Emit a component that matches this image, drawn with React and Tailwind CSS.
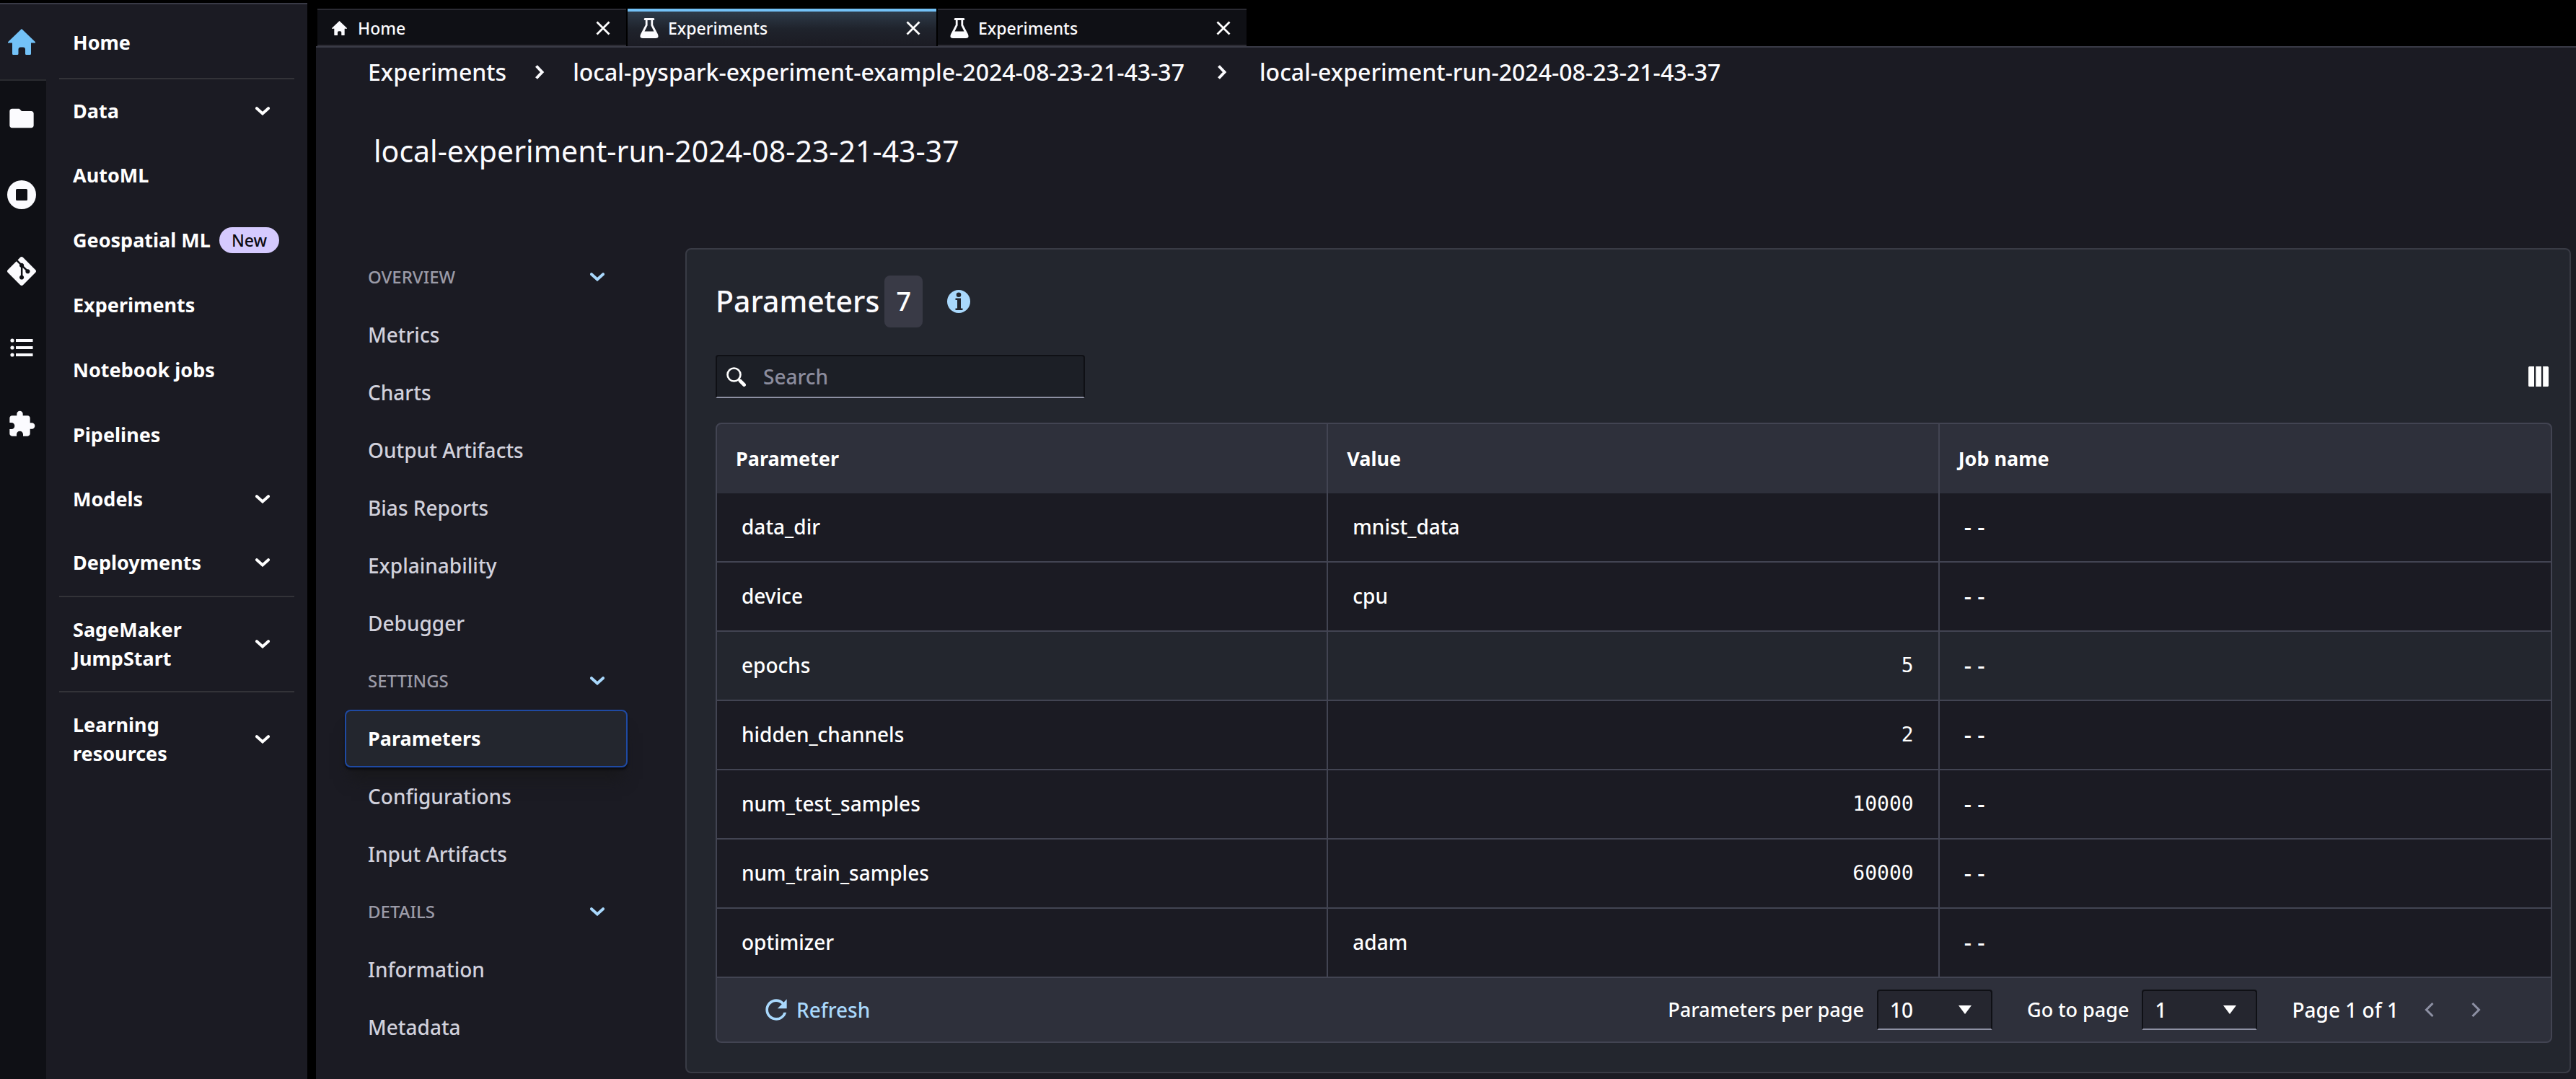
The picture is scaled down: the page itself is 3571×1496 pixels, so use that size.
import { MdExtension, MdFolder, MdRefresh } from "react-icons/md";
import { SiGit } from "react-icons/si";

const HomeIcon = ({ className }) => (
  <svg viewBox="0 0 38 36" className={className} fill="currentColor" aria-hidden="true" preserveAspectRatio="none">
    <path d="M19 0 38 18.200v1.300H32V34.500q0 1.500-1.500 1.500H25.500q-1.500 0-1.500-1.500V28.500q0-3-3-3H17.500q-3 0-3 3V34.500q0 1.500-1.500 1.500H7.500q-1.500 0-1.500-1.500V19.500H0V18.200Z" />
  </svg>
);

const RunningIcon = () => (
  <svg viewBox="0 0 40 40" className="size-10" aria-hidden="true">
    <path
      fill="currentColor"
      fillRule="evenodd"
      d="M20 0a20 20 0 1 1 0 40a20 20 0 1 1 0-40ZM13.500 12q-1.500 0-1.500 1.500v13q0 1.500 1.500 1.500h13q1.500 0 1.500-1.500v-13q0-1.500-1.500-1.500Z"
    />
  </svg>
);

const ListIcon = () => (
  <svg viewBox="0 0 32 26" className="h-[26px] w-8" fill="currentColor" aria-hidden="true">
    <circle cx="3" cy="3" r="2.600" />
    <circle cx="3" cy="13" r="2.600" />
    <circle cx="3" cy="23" r="2.600" />
    <path d="M8 1h23.500v4H8zM8 11h23.500v4H8zM8 21h23.500v4H8z" />
  </svg>
);

const Chevron = ({ className }) => (
  <svg viewBox="0 0 20 12" className={className} fill="none" stroke="currentColor" strokeWidth="4" aria-hidden="true">
    <path d="M2 2.200 10 9.400 18 2.200" strokeLinecap="round" />
  </svg>
);

const FlaskIcon = () => (
  <svg viewBox="0 0 26 28" className="h-7 w-[26px] shrink-0" fill="currentColor" aria-hidden="true">
    <path
      fillRule="evenodd"
      d="M7 0h12q1.300 0 1.300 1.500T19 3h-.800v6.500l6.500 12.500q2.600 6-2.700 6H4q-5.300 0-2.700-6L7.800 9.500V3H7q-1.300 0-1.300-1.500T7 0ZM10.600 3v7.200L6.500 18.400h13L15.400 10.200V3Z"
    />
  </svg>
);

const CloseIcon = () => (
  <svg viewBox="0 0 20 20" className="size-5" fill="none" stroke="currentColor" strokeWidth="2.800" aria-hidden="true">
    <path d="M1.500 1.500l17 17M18.500 1.500l-17 17" />
  </svg>
);

const SearchIcon = () => (
  <svg viewBox="0 0 27 27" className="h-[27px] w-[27px] shrink-0" fill="none" stroke="currentColor" aria-hidden="true">
    <circle cx="10.500" cy="10.500" r="9" strokeWidth="2.600" />
    <path d="M19 19l5.500 5.500" strokeWidth="4.800" strokeLinecap="round" />
    <path d="M16.500 16.500l3 3" strokeWidth="2.600" />
  </svg>
);

const InfoIcon = () => (
  <svg viewBox="0 0 32 32" className="size-8" aria-hidden="true">
    <circle cx="16" cy="16" r="16" fill="#a9d8fc" />
    <circle cx="16" cy="6.800" r="3.300" fill="#23262e" />
    <path d="M11.500 11.500H19V25.500h2.500V28H11.500v-2.500H14V14h-2.500Z" fill="#23262e" />
  </svg>
);

const ColumnsIcon = () => (
  <svg viewBox="0 0 28 28" className="size-7" fill="currentColor" aria-hidden="true">
    <path d="M1.500 0H8v28H1.500Q0 28 0 26.500v-25Q0 0 1.500 0ZM10.300 0h7.600v28h-7.600ZM20.200 0h6.300Q28 0 28 1.500v25q0 1.500-1.500 1.500h-6.300Z" />
  </svg>
);

const railItems = [
  { label: "Home", icon: <HomeIcon className="h-9 w-[38px]" />, active: true },
  { label: "File browser", icon: <MdFolder className="size-10" /> },
  { label: "Running instances", icon: <RunningIcon /> },
  { label: "Git", icon: <SiGit className="size-10" /> },
  { label: "Table of contents", icon: <ListIcon /> },
  { label: "Extensions", icon: <MdExtension className="size-10" /> },
];

const navItems = [
  { label: "Data", expandable: true },
  { label: "AutoML" },
  { label: "Geospatial ML", badge: "New" },
  { label: "Experiments" },
  { label: "Notebook jobs" },
  { label: "Pipelines" },
  { label: "Models", expandable: true },
  { label: "Deployments", expandable: true },
];

const tabs = [
  { label: "Home", home: true },
  { label: "Experiments", active: true },
  { label: "Experiments" },
];

const sections = [
  {
    title: "OVERVIEW",
    items: ["Metrics", "Charts", "Output Artifacts", "Bias Reports", "Explainability", "Debugger"],
  },
  { title: "SETTINGS", items: ["Parameters", "Configurations", "Input Artifacts"] },
  { title: "DETAILS", items: ["Information", "Metadata"] },
];

const rows = [
  { name: "data_dir", value: "mnist_data" },
  { name: "device", value: "cpu" },
  { name: "epochs", value: 5, hover: true },
  { name: "hidden_channels", value: 2 },
  { name: "num_test_samples", value: 10000 },
  { name: "num_train_samples", value: 60000 },
  { name: "optimizer", value: "adam" },
];

function Rail() {
  return (
    <div className="flex w-16 shrink-0 flex-col bg-[#0f1015] text-[#fbfbfe]">
      {railItems.map((item) => (
        <button
          key={item.label}
          type="button"
          aria-label={item.label}
          className={
            item.active
              ? "flex h-[106px] items-center border-b-2 border-[#2a2b30] bg-[#1b1b23] pl-[11px] text-[#73c2f7]"
              : "flex h-[106px] w-[60px] items-center justify-center pb-0.5"
          }
        >
          {item.icon}
        </button>
      ))}
    </div>
  );
}

function ExpandableRow({ label, className }) {
  return (
    <button type="button" className={className}>
      <span className="w-40">{label}</span>
      <Chevron className="h-3 w-5" />
    </button>
  );
}

function SideNav() {
  return (
    <nav className="w-[362px] shrink-0 bg-[#1b1b23] px-[18px] text-[27px] leading-10 font-bold text-white">
      <a href="#home" className="flex h-[104px] items-center border-b-2 border-[#333338] pt-1 pl-[19px]">
        Home
      </a>
      {navItems.map((item) =>
        item.expandable ? (
          <ExpandableRow
            key={item.label}
            label={item.label}
            className="flex h-[88px] w-full items-center justify-between pr-[34px] pl-[19px] text-left"
          />
        ) : (
          <a key={item.label} href="#nav" className="flex h-[90px] items-center gap-3 pl-[19px] whitespace-nowrap">
            {item.label}
            {item.badge && (
              <span className="rounded-full bg-[#d5cafe] px-[17px] text-[23px] leading-9 font-medium text-[#0b0b10]">
                {item.badge}
              </span>
            )}
          </a>
        )
      )}
      <ExpandableRow
        label="SageMaker JumpStart"
        className="mt-0.5 flex h-[134px] w-full items-center justify-between border-y-2 border-[#333338] pr-[34px] pl-[19px] text-left"
      />
      <ExpandableRow
        label="Learning resources"
        className="flex h-[130px] w-full items-center justify-between pr-[34px] pl-[19px] text-left"
      />
    </nav>
  );
}

function TabBar() {
  return (
    <div className="flex gap-0.5 border-b-2 border-[#393a46] pl-0.5" role="tablist">
      {tabs.map((tab, i) => (
        <div
          key={i}
          className={
            tab.active
              ? "flex h-[52px] w-[428px] items-center border-t-4 border-[#73c2f7] bg-linear-to-b from-[#2e3c4a] via-[#1f232c] to-[#1b1b23] pr-[22px] pb-0.5 pl-[17px]"
              : "flex h-[52px] w-[428px] items-center border-y-2 border-[#2b2b33] bg-[#0f1015] pt-0.5 pr-[22px] pl-[17px]"
          }
        >
          <button type="button" role="tab" className="flex min-w-0 flex-1 items-center gap-[13px] text-[23px] font-medium text-[#fbfbfe]">
            {tab.home ? (
              <span className="flex w-[26px] justify-center">
                <HomeIcon className="h-5 w-[21px]" />
              </span>
            ) : (
              <FlaskIcon />
            )}
            {tab.label}
          </button>
          <button type="button" aria-label={`Close ${tab.label}`} className="text-white">
            <CloseIcon />
          </button>
        </div>
      ))}
    </div>
  );
}

function Crumbs() {
  const sep = (
    <svg viewBox="0 0 14 20" className="h-5 w-3.5" fill="none" stroke="currentColor" strokeWidth="4" aria-hidden="true">
      <path d="M2.500 1.500 10.500 10l-8 8.500" />
    </svg>
  );
  return (
    <nav aria-label="Breadcrumb" className="flex h-[68px] items-center pl-[72px] text-[32px] font-medium text-[#fbfbfe]">
      <a href="#experiments">Experiments</a>
      <span className="flex w-[92px] justify-center">{sep}</span>
      <a href="#experiment">local-pyspark-experiment-example-2024-08-23-21-43-37</a>
      <span className="flex w-[104px] justify-center">{sep}</span>
      <a href="#run">local-experiment-run-2024-08-23-21-43-37</a>
    </nav>
  );
}

function SectionNav() {
  return (
    <nav className="w-[392px] shrink-0 text-[28px] font-medium text-[#d1d1dc]">
      {sections.map((section) => (
        <div key={section.title}>
          <button
            type="button"
            className="flex h-20 w-full items-center justify-between pr-8 pl-8 text-2xl text-[#9b9ba8]"
          >
            {section.title}
            <Chevron className="h-3 w-5 text-[#a9d8fc]" />
          </button>
          {section.items.map((item) => (
            <a
              key={item}
              href="#section"
              className={
                item === "Parameters"
                  ? "flex h-20 items-center rounded-lg border-2 border-[#1f4aa3] bg-[#23262e] pl-[30px] text-[27px] font-bold text-white shadow-[0_3px_3px_#0c0c10,0_24px_20px_-8px_#18181b]"
                  : "flex h-20 items-center pl-8"
              }
            >
              {item}
            </a>
          ))}
        </div>
      ))}
    </nav>
  );
}

function PageSelect({ id, label, options }) {
  return (
    <div className="flex items-center gap-[18px]">
      <label htmlFor={id}>{label}</label>
      <div className="relative">
        <select
          id={id}
          className="h-14 w-40 appearance-none rounded-t border-2 border-[#0f1015] border-b-[#8d90a3] bg-[#25262f] pl-4 text-[28px]"
        >
          {options.map((o) => (
            <option key={o}>{o}</option>
          ))}
        </select>
        <svg
          viewBox="0 0 18 12"
          className="pointer-events-none absolute top-[22px] right-[29px] h-3 w-[18px]"
          fill="currentColor"
          aria-hidden="true"
        >
          <path d="M0 0h18L9 12z" />
        </svg>
      </div>
    </div>
  );
}

function ParametersPanel() {
  return (
    <section className="min-w-0 flex-1 rounded-lg border-2 border-[#393b45] bg-[#23262e] pt-9 pr-6 pb-10 pl-10">
      <div className="flex h-[72px] items-center">
        <h2 className="text-[41px] font-medium text-[#fbfbfe]">Parameters</h2>
        <span className="ml-[7px] flex h-[72px] w-[53px] items-center justify-center rounded-lg bg-[#393a46] text-4xl font-medium">
          7
        </span>
        <button type="button" aria-label="About parameters" className="ml-[34px]">
          <InfoIcon />
        </button>
      </div>

      <div className="mt-[38px] flex items-center justify-between">
        <label className="flex h-[60px] w-[512px] items-center gap-6 rounded-t border-2 border-[#0f1015] border-b-[#8d90a3] bg-[#1c1f26] pl-[13px] text-white">
          <SearchIcon />
          <input
            type="text"
            placeholder="Search"
            aria-label="Search"
            className="min-w-0 flex-1 bg-transparent text-[28px] font-medium outline-none placeholder:text-[#8c8d9e]"
          />
        </label>
        <button type="button" aria-label="Choose columns" className="mr-[5px] text-white">
          <ColumnsIcon />
        </button>
      </div>

      <div className="mt-[34px] overflow-hidden rounded-lg border-2 border-[#424452] bg-[#2e303b]">
        <table className="w-full table-fixed border-separate border-spacing-0 text-left text-[28px] font-medium">
          <thead>
            <tr className="h-24 text-[27px]">
              <th className="border-r-2 border-[#424452] pl-[26px] font-bold">Parameter</th>
              <th className="border-r-2 border-[#424452] pl-[26px] font-bold">Value</th>
              <th className="pl-[26px] font-bold">Job name</th>
            </tr>
          </thead>
          <tbody>
            {rows.map((row) => (
              <tr key={row.name} className={row.hover ? "h-24 bg-[#23262e]" : "h-24 bg-[#1b1b23]"}>
                <td className="border-r-2 border-b-2 border-[#424452] pb-0.5 pl-[34px]">{row.name}</td>
                <td
                  className={
                    typeof row.value === "number"
                      ? "border-r-2 border-b-2 border-[#424452] pr-[34px] text-right font-['DejaVu_Sans_Mono',monospace]"
                      : "border-r-2 border-b-2 border-[#424452] pb-0.5 pl-[34px]"
                  }
                >
                  {row.value}
                </td>
                <td className="border-b-2 border-[#424452] pb-0.5 pl-[34px] text-[32px]">- -</td>
              </tr>
            ))}
          </tbody>
        </table>
        <div className="flex h-[88px] items-center justify-between pr-[97px] pl-[60px] text-[27px] font-medium">
          <button type="button" className="flex items-center gap-1.5 text-[28px] text-[#a9d8fc]">
            <MdRefresh className="size-11" />
            Refresh
          </button>
          <div className="flex items-center gap-12">
            <PageSelect id="per-page" label="Parameters per page" options={["10", "25", "50"]} />
            <PageSelect id="go-to" label="Go to page" options={["1"]} />
            <div className="flex items-center">
              <span className="text-[28px]">Page 1 of 1</span>
              <button type="button" aria-label="Previous page" className="ml-9 text-[#8d90a3]">
                <svg viewBox="0 0 13 20" className="h-5 w-[13px]" fill="none" stroke="currentColor" strokeWidth="3" aria-hidden="true">
                  <path d="M11.500 1 2.500 10l9 9" />
                </svg>
              </button>
              <button type="button" aria-label="Next page" className="ml-[52px] text-[#8d90a3]">
                <svg viewBox="0 0 13 20" className="h-5 w-[13px]" fill="none" stroke="currentColor" strokeWidth="3" aria-hidden="true">
                  <path d="M1.500 1l9 9-9 9" />
                </svg>
              </button>
            </div>
          </div>
        </div>
      </div>
    </section>
  );
}

export default function App() {
  return (
    <div className="flex min-h-screen gap-3 bg-black font-['Noto_Sans',sans-serif] text-white">
      <div className="mt-1 flex shrink-0 border-t-2 border-[#393a46]">
        <Rail />
        <SideNav />
      </div>
      <main className="flex min-w-0 flex-1 flex-col pt-3">
        <TabBar />
        <div className="flex-1 bg-[#1b1b23]">
          <Crumbs />
          <h1 className="pt-[50px] pl-20 text-[41px] leading-[50px] text-[#fbfbfe]">
            local-experiment-run-2024-08-23-21-43-37
          </h1>
          <div className="mt-[110px] flex gap-20 pr-[7px] pl-10">
            <SectionNav />
            <ParametersPanel />
          </div>
        </div>
      </main>
    </div>
  );
}
